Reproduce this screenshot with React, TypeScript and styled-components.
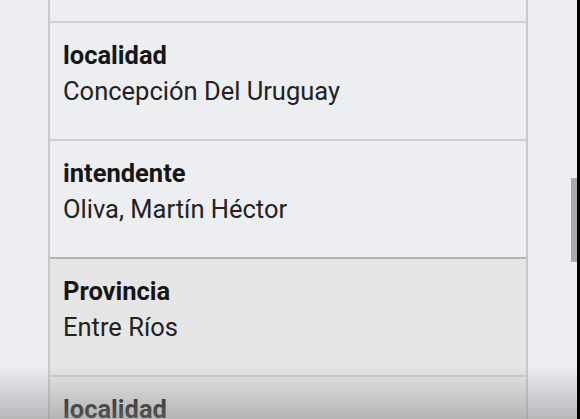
import styled, {createGlobalStyle} from "styled-components";

interface Field {
    label: string
    value: string
    tint?: boolean
}

const fields: Field[] = [
    {label: "localidad", value: "Concepción Del Uruguay"},
    {label: "intendente", value: "Oliva, Martín Héctor"},
    {label: "Provincia", value: "Entre Ríos", tint: true},
    {label: "localidad", value: "Colón", tint: true},
];

const GlobalStyle = createGlobalStyle`
  html, body {
    margin: 0;
    padding: 0;
    background: #eceef2;
    font-family: Roboto, "Liberation Sans", sans-serif;
  }
`;

const Screen = styled.div`
  position: relative;
  width: 580px;
  height: 419px;
  overflow: hidden;
  display: flex;
  background: #eceef2;
`;

const Gutter = styled.div`
  width: 48px;
  flex-shrink: 0;
`;

const Card = styled.div`
  width: 480px;
  flex-shrink: 0;
  box-sizing: border-box;
  border-left: 2px solid #c9c9cb;
  border-right: 2px solid #c9c9cb;
  display: flex;
  flex-direction: column;
`;

// tail of the row scrolled off above
const TopRow = styled.div`
  height: 23px;
  flex-shrink: 0;
  box-sizing: border-box;
  border-bottom: 2px solid #cfd0d2;
`;

const Row = styled.div<{ $tint?: boolean; $heavy?: boolean }>`
  height: 118px;
  flex-shrink: 0;
  box-sizing: border-box;
  padding: 17px 13px 0;
  background: ${p => p.$tint ? "#e6e6e7" : "#eceef2"};
  border-bottom: ${p => p.$heavy ? "2px solid #b2b2b4" : "2px solid #cfd0d2"};
  display: flex;
  flex-direction: column;
  gap: 6px;
`;

const Label = styled.div`
  font-size: 25.5px;
  font-weight: 700;
  line-height: 30px;
  color: #161616;
`;

const Value = styled.div`
  font-size: 25.5px;
  font-weight: 400;
  line-height: 30px;
  color: #222222;
`;

const Track = styled.div`
  flex: 1;
  display: flex;
  justify-content: flex-end;
  padding-top: 178px;
`;

const Thumb = styled.div`
  width: 6px;
  height: 84px;
  background: #a9a9ab;
`;

const Edge = styled.div`
  width: 3px;
  flex-shrink: 0;
  background: #000;
`;

const Shade = styled.div`
  position: absolute;
  left: 0;
  right: 3px;
  bottom: 0;
  height: 54px;
  background: linear-gradient(to bottom, rgba(140, 140, 140, 0), rgba(140, 140, 140, 0.55));
  pointer-events: none;
`;

export default function App() {
    return (
        <>
            <GlobalStyle/>
            <Screen>
                <Gutter/>
                <Card>
                    <TopRow/>
                    {fields.map((f, i) => (
                        <Row key={i} $tint={f.tint} $heavy={i === 1}>
                            <Label>{f.label}</Label>
                            <Value>{f.value}</Value>
                        </Row>
                    ))}
                </Card>
                <Track>
                    <Thumb/>
                </Track>
                <Edge/>
                <Shade/>
            </Screen>
        </>
    );
}
